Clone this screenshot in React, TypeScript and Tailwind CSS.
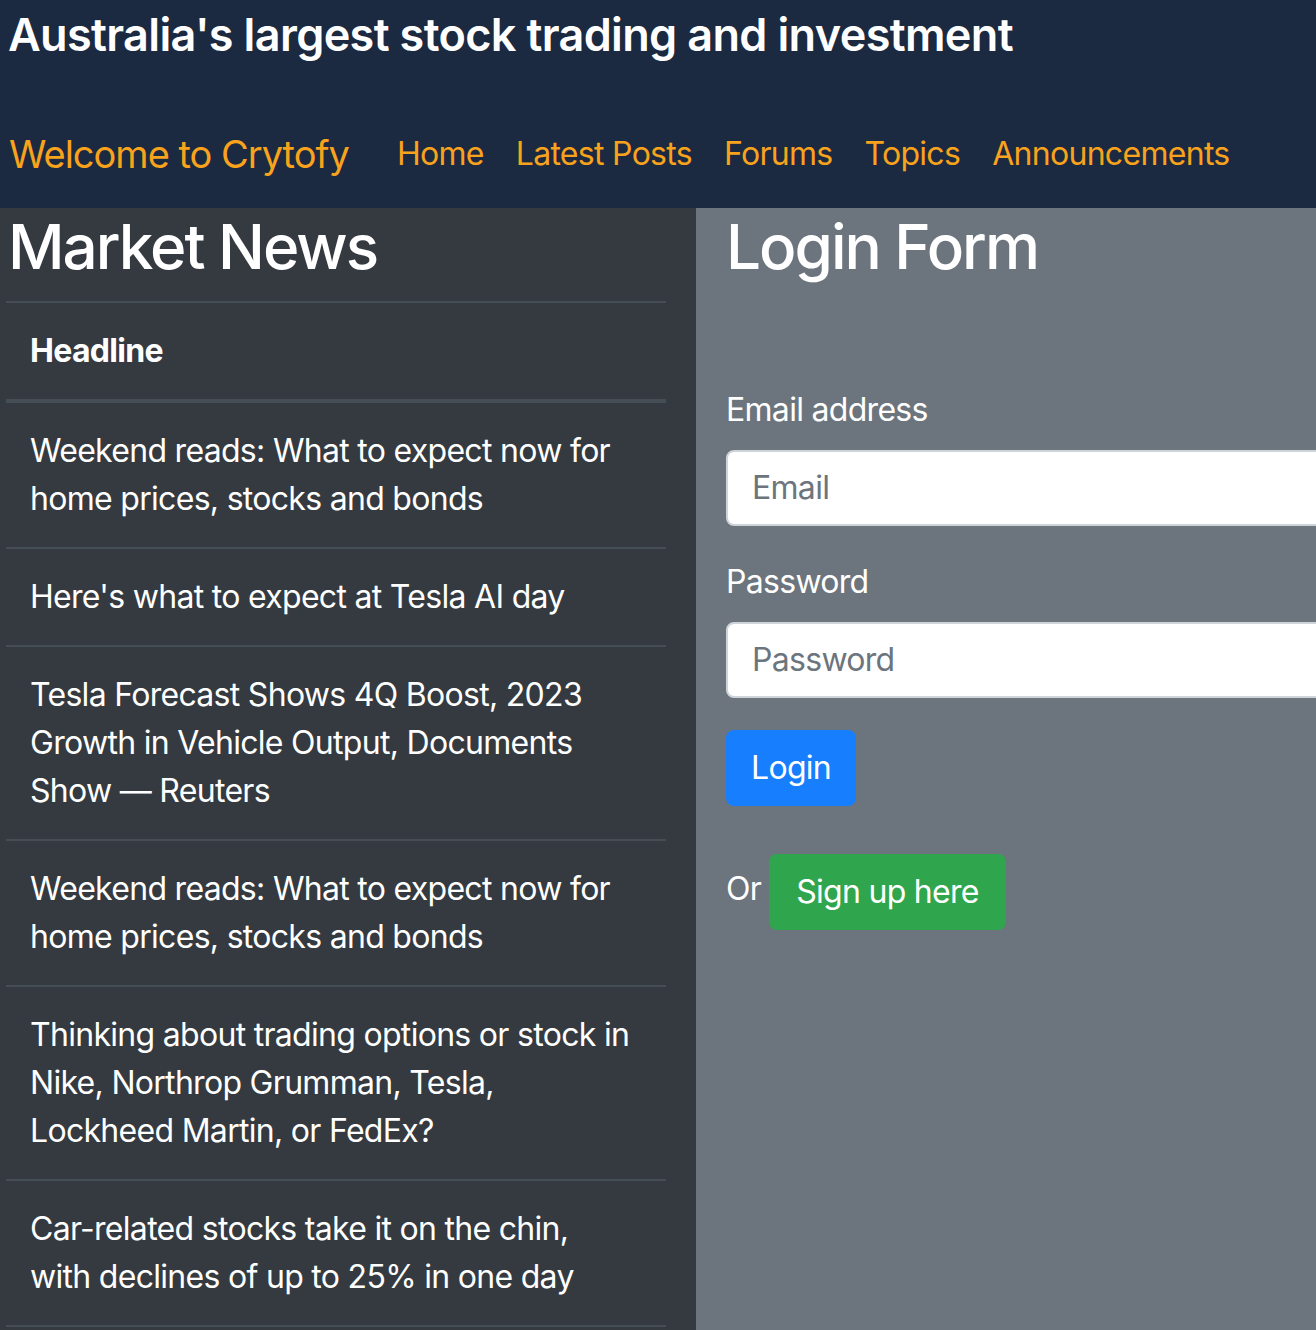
import React from "react";

const news = [
  "Weekend reads: What to expect now for home prices, stocks and bonds",
  "Here's what to expect at Tesla AI day",
  "Tesla Forecast Shows 4Q Boost, 2023 Growth in Vehicle Output, Documents Show — Reuters",
  "Weekend reads: What to expect now for home prices, stocks and bonds",
  "Thinking about trading options or stock in Nike, Northrop Grumman, Tesla, Lockheed Martin, or FedEx?",
  "Car-related stocks take it on the chin, with declines of up to 25% in one day",
];

export default function App() {
  return (
    <div
      className="w-[1316px] h-[1330px] overflow-hidden text-white"
      style={{ fontFamily: "Inter, 'Noto Sans', sans-serif" }}
    >
      <header className="bg-[#1b2a41] h-[208px] pl-[8px]">
        <h5 className="text-[45px] leading-[52px] font-semibold tracking-[-0.65px] pt-[9px] m-0">
          Australia's largest stock trading and investment
        </h5>
        <nav className="flex items-center mt-[63px] pl-[1px]">
          <span className="text-[38px] leading-[60px] tracking-[-1px] text-[#f9a21b] mr-[32px]">
            Welcome to Crytofy
          </span>
          {["Home", "Latest Posts", "Forums", "Topics", "Announcements"].map((l) => (
            <a key={l} className="text-[32px] leading-[48px] tracking-[-0.7px] text-[#f9a21b] px-[16px]">
              {l}
            </a>
          ))}
        </nav>
      </header>
      <div className="flex h-[1122px]">
        <div className="w-[696px] shrink-0 bg-[#343a40] pl-[6px]">
          <h2 className="text-[62px] leading-[77px] font-medium tracking-[-2px] mb-[16px] pl-[2px]">Market News</h2>
          <div className="w-[660px] text-[32px] leading-[48px] tracking-[-0.7px]">
            <div className="border-t-2 border-b-4 border-[#454d55] p-[24px] font-bold">Headline</div>
            {news.map((n, i) => (
              <div key={i} className="border-b-2 border-[#454d55] p-[24px] pr-[32px]">
                {n}
              </div>
            ))}
          </div>
        </div>
        <div className="flex-1 min-w-0 overflow-hidden bg-[#6c757d] pl-[30px]">
          <h2 className="text-[62px] leading-[77px] font-medium tracking-[-2px]">Login Form</h2>
          <div className="mt-[101px] text-[32px] leading-[48px] tracking-[-0.7px]">
            <label className="block mb-[16px]">Email address</label>
            <div className="h-[76px] w-[700px] bg-white border-2 border-[#ced4da] rounded-[8px] px-[24px] flex items-center text-[#6c757d]">
              Email
            </div>
            <label className="block mt-[32px] mb-[16px]">Password</label>
            <div className="h-[76px] w-[700px] bg-white border-2 border-[#ced4da] rounded-[8px] px-[24px] flex items-center text-[#6c757d]">
              Password
            </div>
            <div className="mt-[32px] inline-block bg-[#177efe] rounded-[8px] px-[25px] py-[14px] leading-[48px]">
              Login
            </div>
            <div className="flex items-center mt-[48px]">
              <span className="mr-[8px] -mt-[6px]">Or</span>
              <div className="bg-[#2fa64d] rounded-[8px] px-[27px] py-[14px] leading-[48px]">
                Sign up here
              </div>
            </div>
          </div>
        </div>
      </div>
    </div>
  );
}
